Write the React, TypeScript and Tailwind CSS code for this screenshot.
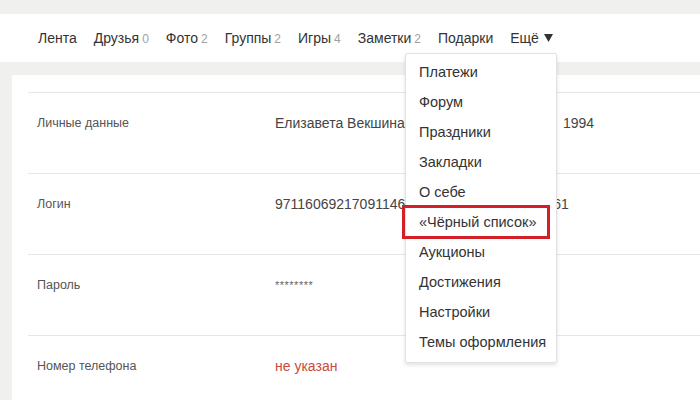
import React from "react";

const navItems: { label: string; count?: string }[] = [
  { label: "Лента" },
  { label: "Друзья", count: "0" },
  { label: "Фото", count: "2" },
  { label: "Группы", count: "2" },
  { label: "Игры", count: "4" },
  { label: "Заметки", count: "2" },
  { label: "Подарки" },
];

const menuItems = [
  "Платежи",
  "Форум",
  "Праздники",
  "Закладки",
  "О себе",
  "«Чёрный список»",
  "Аукционы",
  "Достижения",
  "Настройки",
  "Темы оформления",
];

function Row({ label, children, last }: { label: string; children: React.ReactNode; last?: boolean }) {
  return (
    <div className={`flex h-[81px] items-start pt-[21px] pl-[9px] ${last ? "" : "border-b border-[#e6e6e6]"}`}>
      <div className="w-[238px] shrink-0 text-[12.5px] leading-[18px] text-[#555]">{label}</div>
      <div className="flex whitespace-nowrap text-[14px] leading-[18px] text-[#444]">{children}</div>
    </div>
  );
}

export default function App() {
  return (
    <div
      className="relative h-[400px] w-[700px] overflow-hidden bg-[#f0f0ef]"
      style={{ fontFamily: '"Liberation Sans", Arial, sans-serif' }}
    >
      <div className="pt-[14px]">
        <nav className="flex h-[48px] items-center gap-[17px] bg-white pl-[38px] text-[14px] text-[#333]">
          {navItems.map((item) => (
            <span key={item.label} className="whitespace-nowrap">
              {item.label}
              {item.count && <span className="ml-[3px] text-[12px] text-[#a0a0a0]">{item.count}</span>}
            </span>
          ))}
          <span className="flex items-center gap-[5px]">
            Ещё
            <svg width="9" height="8" viewBox="0 0 9 8">
              <path d="M0 0h9L4.5 8z" fill="#333" />
            </svg>
          </span>
        </nav>
      </div>

      <div className="ml-[12px] mt-[13px] h-[400px] bg-white pl-[16px] pt-[17px]">
        <div className="border-t border-[#e6e6e6]">
          <Row label="Личные данные">
            <span className="w-[288px] overflow-hidden">Елизавета Векшина, 25 лет, 1 мая</span>
            <span>1994</span>
          </Row>
          <Row label="Логин">97116069217091146000000012835402748261</Row>
          <Row label="Пароль">
            <span className="text-[11px] tracking-[0.5px] text-[#666]">********</span>
          </Row>
          <Row label="Номер телефона" last>
            <span className="text-[#c84a3c]">не указан</span>
          </Row>
        </div>
      </div>

      <div className="absolute left-[405px] top-[53px] w-[152px] rounded-[2px] border border-[#e2e2e2] bg-white py-[4px] shadow-[0_2px_4px_rgba(0,0,0,0.12)]">
        {menuItems.map((item) => (
          <div key={item} className="relative flex h-[30px] items-center pl-[13px] text-[14.5px] text-[#333]">
            {item}
            {item === "«Чёрный список»" && (
              <span className="absolute -left-[4px] right-[6px] -top-[3px] -bottom-[1px] border-[3px] border-[#d31f25]" />
            )}
          </div>
        ))}
      </div>
    </div>
  );
}
